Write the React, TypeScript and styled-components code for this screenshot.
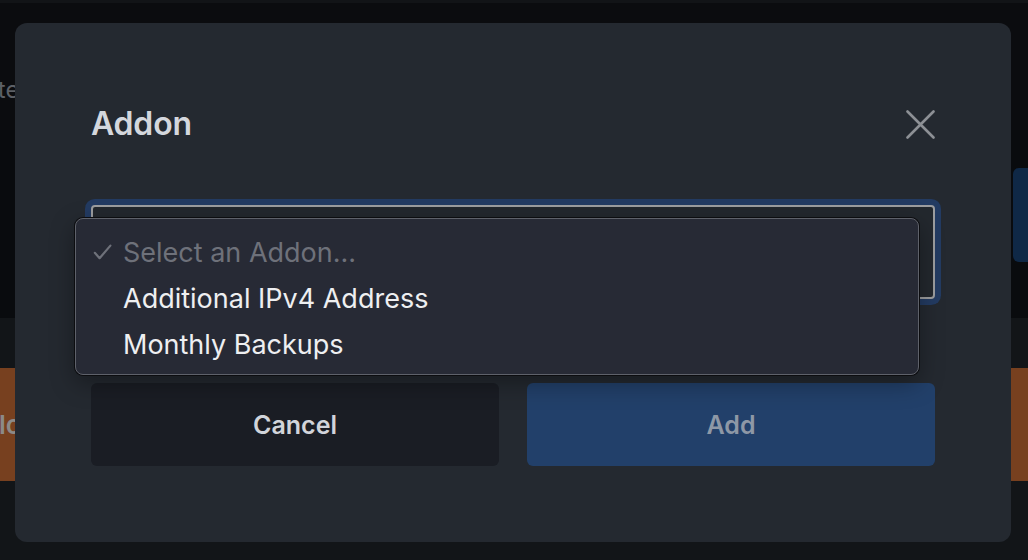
import React from "react";
import styled, { createGlobalStyle } from "styled-components";

const GlobalStyle = createGlobalStyle`
  html, body {
    margin: 0;
    padding: 0;
    background: #0a0c0f;
  }
  body {
    font-family: Inter, "Noto Sans", "Liberation Sans", sans-serif;
    overflow: hidden;
  }
  * { box-sizing: border-box; }
`;

const Page = styled.div`
  position: relative;
  width: 1028px;
  height: 560px;
  overflow: hidden;
  display: flex;
  flex-direction: column;
  background: #0a0c0f;
`;

const TopEdge = styled.div`
  height: 3px;
  background: #121417;
`;

const HeaderBand = styled.div`
  height: 127px;
  background: #0b0c0f;
  display: flex;
  align-items: flex-start;
  padding-top: 73px;
`;

const HeaderTitle = styled.span`
  margin-left: -56px;
  font-size: 24px;
  line-height: 28px;
  color: #5d6066;
  white-space: nowrap;
`;

const MidBand = styled.div`
  height: 188px;
  background: #090b0e;
  display: flex;
  justify-content: flex-end;
  padding-top: 38px;
`;

const SideButton = styled.div`
  width: 15px;
  height: 94px;
  background: #0f2846;
  border-radius: 6px 0 0 6px;
`;

const LowerBand = styled.div`
  flex: 1;
  background: #121518;
  padding-top: 50px;
`;

const OrangeBar = styled.div`
  height: 113px;
  background: #77401f;
  display: flex;
  align-items: center;
`;

const BarLabel = styled.span`
  margin-left: -33px;
  font-size: 26px;
  font-weight: 600;
  color: #8c8a88;
  white-space: nowrap;
`;

const Overlay = styled.div`
  position: absolute;
  inset: 0;
  padding: 23px 17px 18px 15px;
  display: flex;
`;

const Modal = styled.div`
  flex: 1;
  background: #242930;
  border-radius: 12px;
  padding: 76px;
  display: flex;
  flex-direction: column;
`;

const Header = styled.div`
  height: 50px;
  display: flex;
  align-items: center;
  justify-content: space-between;
`;

const Title = styled.h2`
  margin: 0;
  font-size: 32px;
  font-weight: 600;
  line-height: 50px;
  color: #d4d7dd;
  letter-spacing: -0.2px;
`;

const CloseButton = styled.button`
  width: 29px;
  height: 29px;
  padding: 0;
  border: none;
  background: none;
  display: flex;
  align-items: center;
  justify-content: center;
  cursor: pointer;
`;

const SelectWrap = styled.div`
  position: relative;
  margin-top: 56px;
`;

const SelectField = styled.div`
  height: 94px;
  border: 2px solid #9c9d9f;
  border-radius: 4px;
  background: #23282e;
  box-shadow: 0 0 0 6px #233b62;
`;

const Dropdown = styled.ul`
  position: absolute;
  left: -16px;
  top: 13px;
  width: 844px;
  height: 157px;
  margin: 0;
  padding: 10px 0 9px;
  list-style: none;
  background: #272a35;
  border: 1px solid #5e616a;
  border-radius: 8px;
  box-shadow: 0 0 0 1px #0c0d10, 0 8px 24px rgba(0, 0, 0, 0.35);
`;

const Option = styled.li<{ $muted?: boolean }>`
  height: 46px;
  display: flex;
  align-items: center;
  font-size: 27px;
  color: ${(p) => (p.$muted ? "#6e717a" : "#eeeff1")};
  white-space: nowrap;
`;

const CheckSlot = styled.span`
  width: 47px;
  display: flex;
  justify-content: flex-end;
  padding-right: 11px;
`;

const Actions = styled.div`
  margin-top: 84px;
  display: grid;
  grid-template-columns: 1fr 1fr;
  gap: 28px;
`;

const ActionButton = styled.button<{ $primary?: boolean }>`
  height: 83px;
  border: none;
  border-radius: 6px;
  font-family: inherit;
  font-size: 25px;
  font-weight: 600;
  background: ${(p) => (p.$primary ? "#22406a" : "#1a1d24")};
  color: ${(p) => (p.$primary ? "#8e98a6" : "#d1d4da")};
`;

const Check = () => (
  <svg width="19" height="16" viewBox="0 0 19 16" fill="none">
    <polyline
      points="1.8,8.8 6.6,14.2 17.4,1.6"
      stroke="#6e717a"
      strokeWidth="2.2"
      strokeLinecap="round"
      strokeLinejoin="round"
    />
  </svg>
);

const CloseIcon = () => (
  <svg width="29" height="29" viewBox="0 0 29 29" fill="none">
    <path
      d="M1.5 1.5 L27.5 27.5 M27.5 1.5 L1.5 27.5"
      stroke="#8d9095"
      strokeWidth="2.6"
      strokeLinecap="round"
    />
  </svg>
);

export default function App() {
  return (
    <>
      <GlobalStyle />
      <Page>
        <TopEdge />
        <HeaderBand>
          <HeaderTitle>Create</HeaderTitle>
        </HeaderBand>
        <MidBand>
          <SideButton />
        </MidBand>
        <LowerBand>
          <OrangeBar>
            <BarLabel>Reload</BarLabel>
          </OrangeBar>
        </LowerBand>
        <Overlay>
          <Modal>
            <Header>
              <Title>Addon</Title>
              <CloseButton aria-label="Close">
                <CloseIcon />
              </CloseButton>
            </Header>
            <SelectWrap>
              <SelectField />
              <Dropdown>
                <Option $muted>
                  <CheckSlot>
                    <Check />
                  </CheckSlot>
                  Select an Addon...
                </Option>
                <Option>
                  <CheckSlot />
                  Additional IPv4 Address
                </Option>
                <Option>
                  <CheckSlot />
                  Monthly Backups
                </Option>
              </Dropdown>
            </SelectWrap>
            <Actions>
              <ActionButton>Cancel</ActionButton>
              <ActionButton $primary>Add</ActionButton>
            </Actions>
          </Modal>
        </Overlay>
      </Page>
    </>
  );
}
